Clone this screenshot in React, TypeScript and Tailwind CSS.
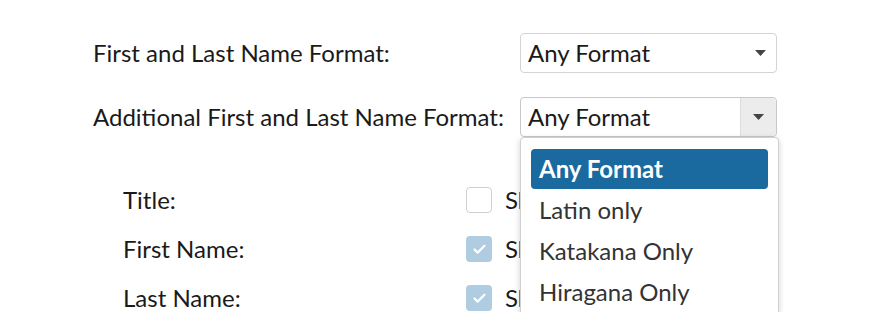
import { Check } from "lucide-react";

const Caret = () => (
  <svg width="11" height="6" viewBox="0 0 11 6" className="fill-[#444]">
    <path d="M0 0h11L5.5 6z" />
  </svg>
);

const Box = ({ checked }: { checked?: boolean }) =>
  checked ? (
    <span className="flex size-[26px] shrink-0 items-center justify-center rounded-[4px] bg-[#b0cce0]">
      <Check size={15} strokeWidth={3.5} className="text-white" />
    </span>
  ) : (
    <span className="size-[26px] shrink-0 rounded-[4px] border border-[#d0d0d0] bg-white" />
  );

const options = ["Any Format", "Latin only", "Katakana Only", "Hiragana Only"];

const App = () => {
  return (
    <div className="relative h-[312px] w-[879px] overflow-hidden bg-white font-['Lato','Open_Sans',sans-serif] text-[24px] text-[#1a1a1a]">
      <div className="pl-[93px] pt-[33px]">
        <div className="flex h-10 items-center">
          <span className="w-[427px]">First and Last Name Format:</span>
          <div className="flex h-10 w-[257px] items-center justify-between rounded-[4px] border border-[#d4d4d4] pl-[7px] pr-[10px]">
            <span>Any Format</span>
            <Caret />
          </div>
        </div>

        <div className="mt-6 flex h-10 items-center">
          <span className="w-[427px]">Additional First and Last Name Format:</span>
          <div className="relative z-10">
            <div className="flex h-10 w-[257px] items-center rounded-[4px] border border-[#c8c8c8]">
              <span className="flex-1 pl-[7px]">Any Format</span>
              <span className="flex h-full w-9 items-center justify-center rounded-r-[4px] border-l border-[#dcdcdc] bg-[#ececec]">
                <Caret />
              </span>
            </div>

            {/* open dropdown menu */}
            <ul className="absolute left-0 top-[40px] w-[259px] rounded-t-[4px] border border-[#d0d0d0] bg-white px-[10px] pt-[11px] shadow-[0_2px_6px_rgba(0,0,0,0.18)]">
              {options.map((o, i) =>
                i === 0 ? (
                  <li
                    key={o}
                    className="flex h-10 items-center rounded-[4px] bg-[#1a6aa0] pl-2 font-bold text-white"
                  >
                    {o}
                  </li>
                ) : (
                  <li key={o} className="flex h-[41px] items-center pl-2 text-[#333]">
                    {o}
                  </li>
                )
              )}
            </ul>
          </div>
        </div>

        <div className="mt-[50px] flex flex-col gap-[23px] pl-[30px]">
          {[
            ["Title:", false],
            ["First Name:", true],
            ["Last Name:", true],
          ].map(([label, checked]) => (
            <div key={label as string} className="flex h-[26px] items-center">
              <span className="w-[343px] shrink-0">{label as string}</span>
              <Box checked={checked as boolean} />
              <span className="ml-[13px] whitespace-nowrap">Show</span>
            </div>
          ))}
        </div>
      </div>
    </div>
  );
};

export default App;
